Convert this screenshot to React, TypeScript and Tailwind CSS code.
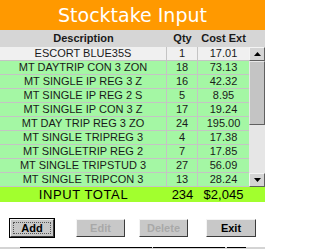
import React from 'react'

/**
 * One line of the stocktake grid
 */
interface StockRow {
  desc: string
  qty: number
  cost: string
}

const ROWS: StockRow[] = [
  { desc: 'ESCORT BLUE35S', qty: 1, cost: '17.01' },
  { desc: 'MT DAYTRIP CON 3 ZON', qty: 18, cost: '73.13' },
  { desc: 'MT SINGLE IP REG 3 Z', qty: 16, cost: '42.32' },
  { desc: 'MT SINGLE IP REG 2 S', qty: 5, cost: '8.95' },
  { desc: 'MT SINGLE IP CON 3 Z', qty: 17, cost: '19.24' },
  { desc: 'MT DAY TRIP REG 3 ZO', qty: 24, cost: '195.00' },
  { desc: 'MT SINGLE TRIPREG 3', qty: 4, cost: '17.38' },
  { desc: 'MT SINGLETRIP REG 2', qty: 7, cost: '17.85' },
  { desc: 'MT SINGLE TRIPSTUD 3', qty: 27, cost: '56.09' },
  { desc: 'MT SINGLE TRIPCON 3', qty: 13, cost: '28.24' },
]

function GridRow({ row, selected }: { row: StockRow; selected: boolean }) {
  const bg = selected ? 'bg-[#f0f0f0]' : 'bg-[#a4f7a4]'
  return (
    <div className={`flex h-[14px] text-[11px] leading-[13px] text-[#1a1a1a] ${bg}`}>
      <div className="w-[167px] text-center border-r border-b border-[#c4c4c4]">{row.desc}</div>
      <div className="w-[31px] text-center border-r border-b border-[#c4c4c4]">{row.qty}</div>
      <div className="w-[51px] text-center border-b border-[#c4c4c4]">{row.cost}</div>
    </div>
  )
}

/**
 * Old style 3D push button
 */
function Btn({
  label,
  disabled = false,
  focused = false,
  className = '',
}: {
  label: string
  disabled?: boolean
  focused?: boolean
  className?: string
}) {
  return (
    <div
      className={`h-[18px] bg-[#c8c8c8] border border-t-[#f4f4f4] border-l-[#f4f4f4] border-b-[#3c3c3c] border-r-[#3c3c3c] flex items-center justify-center text-[11px] font-bold ${
        disabled ? 'text-[#a8a8a8]' : 'text-black'
      } ${focused ? 'outline outline-1 outline-black' : ''} ${className}`}
    >
      {focused ? (
        <span className="border border-dotted border-[#555] w-[calc(100%-4px)] h-[12px] flex items-center justify-center leading-none">
          {label}
        </span>
      ) : (
        label
      )}
    </div>
  )
}

export default function App() {
  return (
    <div className="w-[265px] h-[249px] bg-white overflow-hidden flex flex-col font-['Liberation_Sans',Arial,sans-serif]">
      {/* Title */}
      <div className="h-[30px] bg-[#ff9900] flex items-center justify-center text-white text-[19px] font-['DejaVu_Sans',sans-serif]">
        Stocktake Input
      </div>

      {/* Column headers */}
      <div className="h-[17px] bg-[#d6d6d6] flex text-[11px] font-bold text-[#1a1a1a] leading-[17px]">
        <div className="w-[167px] text-center">Description</div>
        <div className="w-[31px] text-center">Qty</div>
        <div className="w-[51px] text-center">Cost Ext</div>
      </div>

      {/* Grid + scrollbar */}
      <div className="flex h-[140px]">
        <div className="w-[249px]">
          {ROWS.map((r, i) => (
            <GridRow key={r.desc} row={r} selected={i === 0} />
          ))}
        </div>
        <div className="w-[16px] bg-[#e6e6e6] flex flex-col">
          <div className="h-[14px] bg-[#d4d4d4] border border-t-[#f4f4f4] border-l-[#f4f4f4] border-b-[#606060] border-r-[#606060] flex items-center justify-center">
            <svg width="7" height="4" viewBox="0 0 7 4">
              <path d="M3.5 0 L7 4 L0 4 Z" fill="#000" />
            </svg>
          </div>
          <div className="h-[64px] bg-[#c4c4c4] border border-t-[#e8e8e8] border-l-[#e8e8e8] border-b-[#606060] border-r-[#606060]" />
          <div className="flex-1" />
          <div className="h-[14px] bg-[#d4d4d4] border border-t-[#f4f4f4] border-l-[#f4f4f4] border-b-[#606060] border-r-[#606060] flex items-center justify-center">
            <svg width="7" height="4" viewBox="0 0 7 4">
              <path d="M0 0 L7 0 L3.5 4 Z" fill="#000" />
            </svg>
          </div>
        </div>
      </div>

      {/* Totals */}
      <div className="h-[15px] bg-[#a2ff2e] flex items-center text-[13px] text-black leading-none">
        <div className="w-[167px] text-center tracking-[0.6px]">INPUT TOTAL</div>
        <div className="w-[31px] text-center">234</div>
        <div className="w-[51px] text-center">$2,045</div>
      </div>

      {/* Buttons */}
      <div className="flex pt-[17px]">
        <Btn label="Add" focused className="ml-[10px] w-[44px]" />
        <Btn label="Edit" disabled className="ml-[22px] w-[49px]" />
        <Btn label="Delete" disabled className="ml-[14px] w-[49px]" />
        <Btn label="Exit" className="ml-[18px] w-[50px]" />
      </div>

      {/* Bottom strip */}
      <div className="mt-[10px] h-[2px] flex bg-[#d4d4d4]">
        <div className="w-[20px]" />
        <div className="w-[132px] border-t border-black" />
        <div className="w-[1px]" />
        <div className="w-[72px] border-t border-black" />
        <div className="w-[2px]" />
        <div className="w-[19px] border-t border-black" />
      </div>
    </div>
  )
}
